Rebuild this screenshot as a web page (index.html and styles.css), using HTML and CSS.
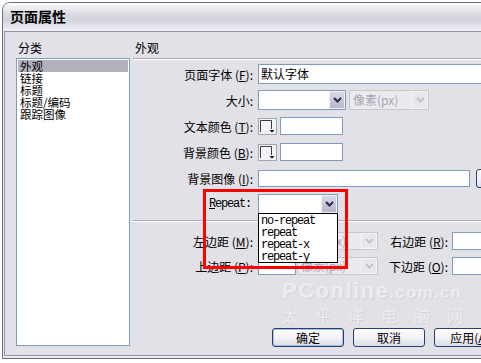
FILE: index.html
```html
<!DOCTYPE html>
<html lang="zh-CN">

<head>
    <meta charset="UTF-8">
    <title>页面属性</title>
    <link rel="stylesheet" href="styles.css">
</head>

<body>
    <div class="window">
        <div class="titlebar">页面属性</div>
        <div class="dialog">
            <div class="category">
                <div class="heading">分类</div>
                <ul class="list">
                    <li class="selected">外观</li>
                    <li>链接</li>
                    <li>标题</li>
                    <li>标题/编码</li>
                    <li>跟踪图像</li>
                </ul>
            </div>

            <div class="panel">
                <div class="heading panel-heading">外观</div>

                <div class="row">
                    <span class="label">页面字体 (<u>F</u>):</span>
                    <div class="field font-field">默认字体</div>
                </div>
                <div class="row">
                    <span class="label">大小:</span>
                    <div class="select size-select">
                        <span class="value"></span>
                        <span class="arrow"><svg width="9" height="6" viewBox="0 0 9 6"><path d="M1 1l3.5 3.5L8 1" /></svg></span>
                    </div>
                    <div class="select unit-select disabled">
                        <span class="value">像素(px)</span>
                        <span class="arrow"><svg width="9" height="6" viewBox="0 0 9 6"><path d="M1 1l3.5 3.5L8 1" /></svg></span>
                    </div>
                </div>
                <div class="row">
                    <span class="label">文本颜色 (<u>T</u>):</span>
                    <svg class="swatch" width="19" height="17" viewBox="0 0 19 17"><rect x="0.5" y="0.5" width="18" height="16" fill="#f4f4f6" stroke="#a3a3b0" /><path d="M2.5 14V2.5H13.5V11" fill="none" stroke="#3c3c3c" /><path d="M11.5 12h5l-2.5 2.5z" fill="#000" /></svg>
                    <div class="field color-field"></div>
                </div>
                <div class="row">
                    <span class="label">背景颜色 (<u>B</u>):</span>
                    <svg class="swatch" width="19" height="17" viewBox="0 0 19 17"><rect x="0.5" y="0.5" width="18" height="16" fill="#f4f4f6" stroke="#a3a3b0" /><path d="M2.5 14V2.5H13.5V11" fill="none" stroke="#3c3c3c" /><path d="M11.5 12h5l-2.5 2.5z" fill="#000" /></svg>
                    <div class="field color-field"></div>
                </div>
                <div class="row">
                    <span class="label">背景图像 (<u>I</u>):</span>
                    <div class="field image-field"></div>
                    <div class="btn browse"></div>
                </div>
                <div class="row">
                    <span class="label mono"><u>R</u>epeat:</span>
                    <div class="select repeat-select">
                        <span class="value"></span>
                        <span class="arrow"><svg width="9" height="6" viewBox="0 0 9 6"><path d="M1 1l3.5 3.5L8 1" /></svg></span>
                        <ul class="dropdown">
                            <li>no-repeat</li>
                            <li>repeat</li>
                            <li>repeat-x</li>
                            <li>repeat-y</li>
                        </ul>
                    </div>
                </div>

                <div class="divider"></div>

                <div class="row small">
                    <span class="label">左边距 (<u>M</u>):</span>
                    <div class="field margin-field"></div>
                    <div class="select margin-unit disabled">
                        <span class="value">像素(px)</span>
                        <span class="arrow"><svg width="9" height="6" viewBox="0 0 9 6"><path d="M1 1l3.5 3.5L8 1" /></svg></span>
                    </div>
                    <span class="label side-label">右边距 (<u>R</u>):</span>
                    <div class="field margin-field wide"></div>
                </div>
                <div class="row small">
                    <span class="label">上边距 (<u>P</u>):</span>
                    <div class="field margin-field"></div>
                    <div class="select margin-unit disabled">
                        <span class="value">像素(px)</span>
                        <span class="arrow"><svg width="9" height="6" viewBox="0 0 9 6"><path d="M1 1l3.5 3.5L8 1" /></svg></span>
                    </div>
                    <span class="label side-label">下边距 (<u>O</u>):</span>
                    <div class="field margin-field wide"></div>
                </div>

                <div class="buttons">
                    <div class="btn default">确定</div>
                    <div class="btn">取消</div>
                    <div class="btn">应用(<u>A</u>)</div>
                </div>
            </div>
        </div>

        <div class="watermark">
            <div class="brand">PConline<span>.com.cn</span></div>
            <div class="brand-cn">太平洋电脑网</div>
        </div>
        <div class="highlight"></div>
    </div>
</body>

</html>
```

FILE: styles.css
```css
* {
    box-sizing: border-box;
}

body {
    margin: 0;
    background: #fff;
    overflow: hidden;
    font-family: "Noto Sans CJK SC", sans-serif;
    font-size: 12px;
    color: #000;
}

u {
    text-decoration: underline;
    text-underline-offset: 1px;
}

.window {
    position: relative;
    margin: 2px 0 0 2px;
    width: 560px;
    height: 357px;
    border: 1px solid #6c6c84;
    border-radius: 8px 8px 0 0;
    background: #ebebf0;
}

.titlebar {
    height: 27px;
    padding-left: 7px;
    border-radius: 7px 7px 0 0;
    background: linear-gradient(to bottom, #ffffff 0%, #f1f1f5 12%, #dcdce4 38%, #d3d3dc 62%, #e3e3ea 86%, #efeff3 100%);
    font-size: 14px;
    font-weight: bold;
    line-height: 27px;
}

.dialog {
    display: flex;
    height: 325px;
    margin: 1px 1px 2px 1px;
    padding: 8px 0 0 11px;
    border: 1px solid #9392ab;
    background: #e2e1e7;
}

.heading {
    height: 16px;
    line-height: 16px;
    margin-bottom: 2px;
    padding-left: 2px;
}

.category {
    width: 114px;
    margin-right: 3px;
}

.list {
    height: 288px;
    margin: 0;
    padding: 1px;
    list-style: none;
    background: #fff;
    border: 1px solid #7f9db9;
    font-size: 11.5px;
}

.list li {
    height: 12px;
    line-height: 12px;
    padding-left: 2px;
    white-space: nowrap;
}

.list .selected {
    background: #b2b1bc;
}

.panel {
    flex: 1;
}

.panel-heading {
    height: 19px;
    margin-bottom: 5px;
    border-bottom: 1px solid #a9a8b4;
    box-shadow: 0 1px 0 #fff;
}

.row {
    display: flex;
    align-items: center;
    height: 20px;
    margin-bottom: 6px;
}

.row.small {
    height: 18px;
    margin-bottom: 7px;
}

.label {
    width: 120px;
    margin-right: 5px;
    text-align: right;
    white-space: nowrap;
}

.mono {
    font-family: "Liberation Mono", monospace;
    letter-spacing: -1.2px;
    padding-right: 2px;
}

.field {
    height: 20px;
    padding: 0 2px;
    line-height: 18px;
    background: #fff;
    border: 1px solid #7f9db9;
    white-space: nowrap;
}

.font-field {
    width: 260px;
}

.color-field {
    width: 63px;
    height: 18px;
    margin-left: 3px;
}

.image-field {
    width: 212px;
    height: 17px;
}

.margin-field {
    width: 38px;
    height: 18px;
    margin-right: 1px;
}

.margin-field.wide {
    width: 60px;
}

.side-label {
    width: 70px;
    margin-right: 4px;
}

.swatch {
    display: block;
    flex: none;
}

.select {
    position: relative;
    display: flex;
    height: 20px;
    background: #fff;
    border: 1px solid #7f9db9;
}

.select .value {
    flex: 1;
    padding-left: 3px;
    line-height: 18px;
    white-space: nowrap;
    overflow: hidden;
}

.select .arrow {
    display: flex;
    align-items: center;
    justify-content: center;
    width: 16px;
    border: 1px solid #eeeef6;
    background: linear-gradient(to bottom, #d8d8e6, #b7b7cb);
}

.select .arrow path {
    fill: none;
    stroke: #2b2b45;
    stroke-width: 2;
}

.select.disabled {
    border-color: #c8c7cf;
    background: #ebeaef;
    color: #a7a6b0;
}

.select.disabled .arrow {
    border-color: #f4f4f6;
    background: #e8e8ec;
}

.select.disabled .arrow path {
    stroke: #c2c2ca;
}

.size-select {
    width: 88px;
    margin-right: 3px;
}

.unit-select {
    width: 80px;
}

.margin-unit {
    width: 81px;
    height: 18px;
}

.margin-unit .value {
    line-height: 16px;
}

.repeat-select {
    width: 80px;
}

.dropdown {
    position: absolute;
    top: 18px;
    left: -1px;
    z-index: 2;
    width: 80px;
    height: 50px;
    margin: 0;
    padding: 1px 0 0 2px;
    list-style: none;
    background: #fff;
    border: 1px solid #000;
    font-family: "Liberation Mono", monospace;
    letter-spacing: -1.2px;
}

.dropdown li {
    height: 12px;
    line-height: 12px;
}

.divider {
    margin-bottom: 11px;
    border-top: 1px solid #a9a8b4;
    box-shadow: 0 1px 0 #fff;
}

.buttons {
    display: flex;
    gap: 9px;
    margin-top: 53px;
    padding-left: 139px;
}

.btn {
    width: 72px;
    height: 19px;
    line-height: 17px;
    text-align: center;
    white-space: nowrap;
    border: 1px solid #26406e;
    border-radius: 3px;
    background: linear-gradient(to bottom, #ffffff 0%, #f4f4f8 45%, #dcdce6 100%);
}

.btn.default {
    box-shadow: inset 0 0 0 1px #a9bde6;
}

.browse {
    width: 70px;
    height: 19px;
    margin-left: 6px;
}

.watermark {
    position: absolute;
    left: 279px;
    top: 276px;
    color: #ededf1;
    text-shadow: 1px 1px 0 #d3d3db;
    font-family: "Liberation Sans", sans-serif;
    pointer-events: none;
}

.brand {
    font-size: 22px;
    font-weight: bold;
    letter-spacing: 1.5px;
    line-height: 24px;
}

.brand span {
    font-size: 17px;
    letter-spacing: 1.2px;
}

.brand-cn {
    font-family: "Noto Sans CJK SC", sans-serif;
    font-size: 16px;
    letter-spacing: 17px;
    line-height: 20px;
}

.highlight {
    position: absolute;
    left: 200px;
    top: 186px;
    width: 145px;
    height: 80px;
    border: 3px solid #f00;
    z-index: 3;
}
```
